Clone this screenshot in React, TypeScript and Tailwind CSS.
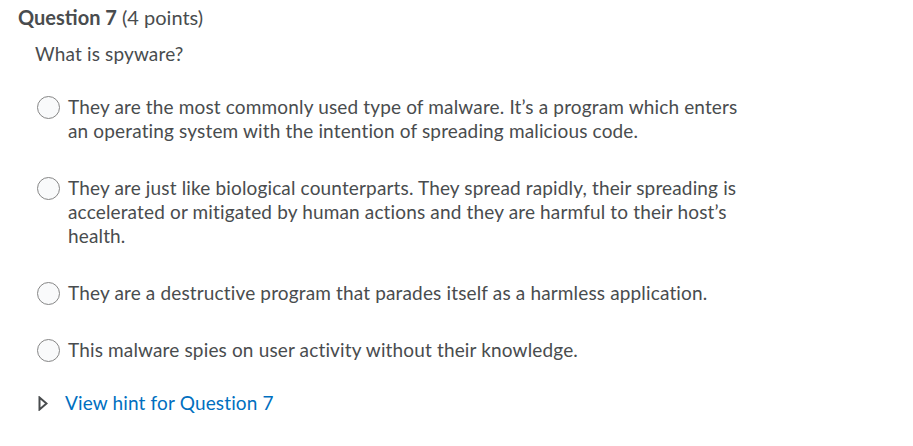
import React from 'react';

const options = [
  "They are the most commonly used type of malware. It\u2019s a program which enters an operating system with the intention of spreading malicious code.",
  "They are just like biological counterparts. They spread rapidly, their spreading is accelerated or mitigated by human actions and they are harmful to their host\u2019s health.",
  "They are a destructive program that parades itself as a harmless application.",
  "This malware spies on user activity without their knowledge.",
];

const App: React.FC = () => {
  return (
    <div className="w-[913px] h-[446px] bg-white text-[#494c4e] font-['Lato','Liberation_Sans',sans-serif] text-[19px] leading-[24px] tracking-[0.15px]">
      <div className="pl-[18px] pt-[5px] text-[20px] tracking-normal">
        <span className="font-bold">Question 7</span> (4 points)
      </div>
      <div className="pl-[35px] pt-[13px]">What is spyware?</div>
      <div className="pl-[37px] pt-[29px] flex flex-col gap-[33px]">
        {options.map((text, i) => (
          <label key={i} className="flex items-start gap-[8px]">
            <span className="mt-[1px] shrink-0 w-[23px] h-[23px] rounded-full border border-[#868686] bg-[#f9fafb]"></span>
            <span className="w-[680px]">{text}</span>
          </label>
        ))}
      </div>
      <div className="pl-[38px] pt-[29px] flex items-center gap-[17px]">
        <svg width="10" height="15" viewBox="0 0 10 15" className="shrink-0">
          <path d="M1.5 1.5 L8.5 7.5 L1.5 13.5 Z" fill="none" stroke="#494c4e" strokeWidth="2" strokeLinejoin="miter" />
        </svg>
        <span className="text-[#006fbf]">View hint for Question 7</span>
      </div>
    </div>
  );
};

export default App;
